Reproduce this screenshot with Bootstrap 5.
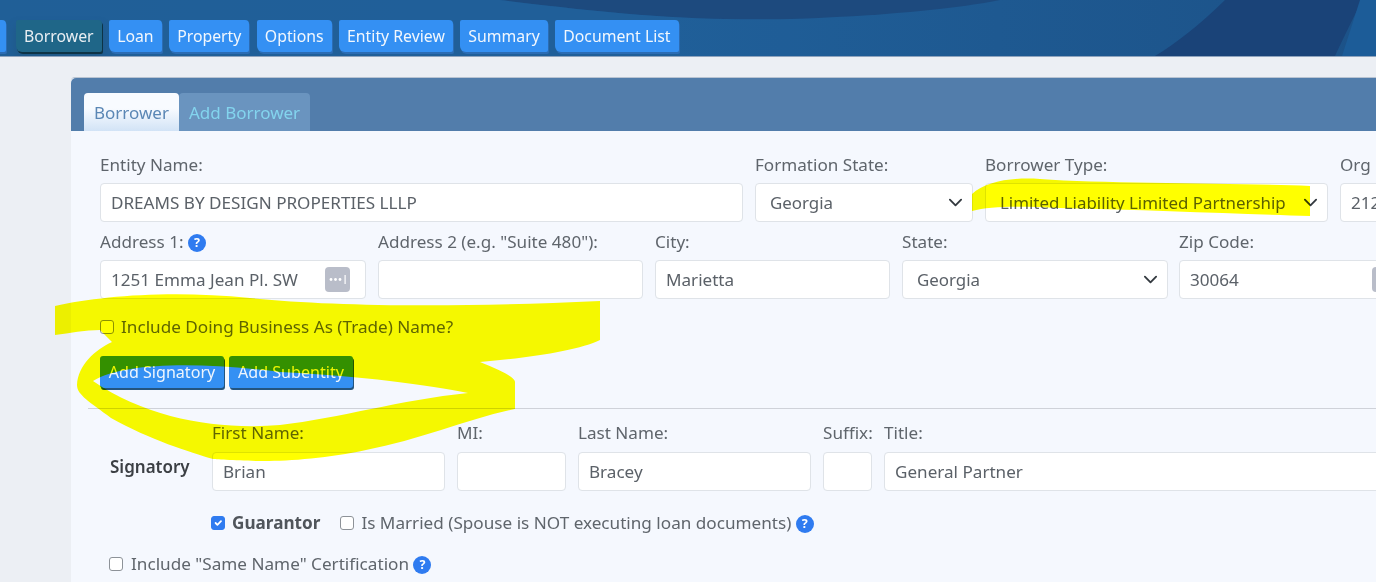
<!DOCTYPE html>
<html lang="en">
<head>
<meta charset="utf-8">
<title>Borrower</title>
<link rel="stylesheet" href="https://cdn.jsdelivr.net/npm/bootstrap@5.3.0/dist/css/bootstrap.min.css">
<style>
html,body{height:582px;overflow:hidden}
body{background:#eceff4;font-family:"Noto Sans",sans-serif;font-size:17px;color:#5b6168}
.topbar{position:relative;height:57px;background:linear-gradient(90deg,#215f97 0%,#20609a 45%,#1c5288 100%);border-bottom:1px solid #8ea3bd;overflow:hidden}
.topbar-art{position:absolute;inset:0;width:100%;height:100%}
.step-row{position:relative;padding-top:20px;margin-left:-14px;gap:7.5px}
.step-btn{height:32px;padding:0 8px;font-size:15.8px;line-height:33px;color:#f2f7fd;background:#3490f3;border:0;border-radius:2px 4px 2px 6px;box-shadow:1px 2px 0 #2b6cb4;white-space:nowrap}
.step-btn:hover{color:#fff;background:#3490f3}
.step-stub{width:20px;margin-right:2.5px}
.step-on,.step-on:hover{background:#1f6688;color:#e8eef2;box-shadow:1px 2px 0 #0d3346,0 6px 10px rgba(30,80,110,.45)}
.sheet{margin:20px 0 0 71px;width:1420px;height:520px;background:#f5f8fe;border:0;border-radius:4px 0 0 0;border-top:1px solid #b9c4d2}
.sheet-head{height:53px;background:#527dab;padding:15px 0 0 13px;border:0;border-radius:4px 0 0 0}
.sheet-tabs{border:0;margin:0;gap:0}
.sheet-tabs .nav-link{height:38px;padding:0 10px;line-height:40px;font-size:17px;border:0;border-radius:4px 4px 0 0;margin:0}
.sheet-tabs .nav-link.active{background:linear-gradient(#f8fbff 40%,#d2e3f6);color:#5b87b5}
.sheet-tabs .nav-link.tab-off{background:#6a94bf;color:#83d4ee}
.sheet-body{padding:25px 0 0 29px;position:relative}
.field-row{display:flex;gap:12px}
.fld label{display:block;height:18px;line-height:18px;margin:0 0 9px;font-size:17.1px;color:#5f656c;white-space:nowrap}
.fld .form-control,.fld .form-select{height:39px;padding:0 10px;font-size:17.1px;color:#5b6168;border:1px solid #dfe3e8;border-radius:4px;box-shadow:none;background-color:#fff}
.fld .form-select{padding-left:14px;font-size:16.9px;background-position:right 7px center;background-size:19px 15px}
.row-gap{margin-top:11px}
.w-entity{width:643px}.w-state{width:218px}.w-type{width:343px}.w-org{width:120px}
.w-ad1{width:266px}.w-ad2{width:265px}.w-city{width:235px}.w-st2{width:266px}.w-zip{width:234px;margin-left:-1px}
.w-first{width:233px}.w-mi{width:109px}.w-last{width:233px}.w-suffix{width:49px}.w-title{width:520px}
.input-wrap{position:relative}
.dots-btn{position:absolute;right:16px;top:7px;width:25px;height:25px;background:#b9bdc9;border-radius:4px;display:flex;align-items:center;justify-content:center}
.help{display:inline-block;width:18px;height:18px;border-radius:50%;background:#2f7bf0;color:#fff;font-size:12.5px;font-weight:700;line-height:18px;text-align:center;vertical-align:1px}
.chk{display:flex;align-items:center;gap:7px;font-size:17.15px;line-height:24px;color:#5f656c;margin:0}
.chk .form-check-input{width:14px;height:14px;margin:0;border:1.5px solid #8d9298;border-radius:3px;flex:none;background-color:#fff}
.chk .form-check-input:checked{background-color:#2f7bf0;border-color:#2f7bf0}
.dba-line{margin-top:18px;height:20px}
.act-row{margin-top:19px;gap:5px}
.act-btn{height:32px;padding:0 8px;font-size:16.1px;line-height:33px;color:#eef5fd;background:#3490f3;border:0;border-radius:3px;box-shadow:1px 2px 0 #23547f;width:124px;white-space:nowrap}
.divide{margin:20px 0 0 -12px;border:0;border-top:1px solid #b5b9bf;opacity:.6}
.sign-row{display:flex;margin-top:15px}
.sign-row .fld label{margin-bottom:10px}
.sign-name{width:112px;padding:0 0 0 10px;margin-top:30px;font-weight:600;font-size:17px;color:#3b3f44}
.opts-line{margin:20px 0 0 111px;gap:20px}
.guar{font-weight:700;color:#50555b}
.same-line{margin:17px 0 0 9px;gap:8px}
.marker{position:absolute;left:0;top:0;width:1376px;height:582px;mix-blend-mode:multiply;pointer-events:none}
</style>
</head>
<body>
<header class="topbar">
  <svg class="topbar-art" viewBox="0 0 1376 57" preserveAspectRatio="none" aria-hidden="true">
    <path d="M500 0 C620 15 700 22 800 19 C900 15 960 8 1000 0Z" fill="#1d4a7e"/>
    <path d="M1225 0 C1200 25 1175 45 1155 57 L1335 57 C1345 35 1355 15 1362 0Z" fill="#1a4378"/>
    <path d="M0 0H500C620 15 700 22 800 19V57H0Z" fill="#215f99" opacity=".4"/>
    <path d="M1360 0 L1342 57 H1376 V0Z" fill="#1c5c98"/>
  </svg>
  <nav class="d-flex step-row">
    <a class="btn step-btn step-stub" href="#" aria-label="Previous step"></a>
    <a class="btn step-btn step-on" href="#">Borrower</a>
    <a class="btn step-btn" href="#">Loan</a>
    <a class="btn step-btn" href="#">Property</a>
    <a class="btn step-btn" href="#">Options</a>
    <a class="btn step-btn" href="#">Entity Review</a>
    <a class="btn step-btn" href="#">Summary</a>
    <a class="btn step-btn" href="#">Document List</a>
  </nav>
</header>
<main class="card sheet">
  <div class="card-header sheet-head">
    <ul class="nav nav-tabs sheet-tabs">
      <li class="nav-item"><a class="nav-link active" href="#">Borrower</a></li>
      <li class="nav-item"><a class="nav-link tab-off" href="#">Add Borrower</a></li>
    </ul>
  </div>
  <div class="sheet-body">
    <div class="field-row">
      <div class="fld w-entity"><label>Entity Name:</label><input class="form-control" value="DREAMS BY DESIGN PROPERTIES LLLP"></div>
      <div class="fld w-state"><label>Formation State:</label><select class="form-select"><option>Georgia</option></select></div>
      <div class="fld w-type"><label>Borrower Type:</label><select class="form-select"><option>Limited Liability Limited Partnership</option></select></div>
      <div class="fld w-org"><label>Org</label><input class="form-control" value="212"></div>
    </div>
    <div class="field-row row-gap">
      <div class="fld w-ad1"><label>Address 1: <span class="help">?</span></label>
        <div class="input-wrap"><input class="form-control" value="1251 Emma Jean Pl. SW">
          <span class="dots-btn"><svg width="19" height="13" viewBox="0 0 19 13" aria-hidden="true"><circle cx="3" cy="6.5" r="1.4" fill="#fff"/><circle cx="7.5" cy="6.5" r="1.4" fill="#fff"/><circle cx="12" cy="6.5" r="1.4" fill="#fff"/><rect x="16.5" y="2" width="1.2" height="9" fill="#fff"/></svg></span></div></div>
      <div class="fld w-ad2"><label>Address 2 (e.g. "Suite 480"):</label><input class="form-control"></div>
      <div class="fld w-city"><label>City:</label><input class="form-control" value="Marietta"></div>
      <div class="fld w-st2"><label>State:</label><select class="form-select"><option>Georgia</option></select></div>
      <div class="fld w-zip"><label>Zip Code:</label><div class="input-wrap"><input class="form-control" value="30064"><span class="dots-btn"></span></div></div>
    </div>
    <label class="chk dba-line"><input class="form-check-input" type="checkbox">Include Doing Business As (Trade) Name?</label>
    <div class="d-flex act-row">
      <button class="btn act-btn" type="button">Add Signatory</button>
      <button class="btn act-btn" type="button">Add Subentity</button>
    </div>
    <hr class="divide">
    <div class="sign-row">
      <div class="sign-name">Signatory</div>
      <div class="field-row">
        <div class="fld w-first"><label>First Name:</label><input class="form-control" value="Brian"></div>
        <div class="fld w-mi"><label>MI:</label><input class="form-control"></div>
        <div class="fld w-last"><label>Last Name:</label><input class="form-control" value="Bracey"></div>
        <div class="fld w-suffix"><label>Suffix:</label><input class="form-control"></div>
        <div class="fld w-title"><label>Title:</label><input class="form-control" value="General Partner"></div>
      </div>
    </div>
    <div class="d-flex opts-line">
      <label class="chk"><input class="form-check-input" type="checkbox" checked><span class="guar">Guarantor</span></label>
      <label class="chk"><input class="form-check-input" type="checkbox"><span>Is Married (Spouse is NOT executing loan documents) <span class="help">?</span></span></label>
    </div>
    <label class="chk same-line"><input class="form-check-input" type="checkbox"><span>Include "Same Name" Certification <span class="help">?</span></span></label>
  </div>
</main>
<svg class="marker" viewBox="0 0 1376 582" aria-hidden="true">
  <path fill="#ffff00" d="M972 194 C985 182 1010 177 1040 179 C1110 184 1240 183 1310 186 L1310 216 C1240 214 1150 210 1060 208 C1020 206 990 206 972 211Z"/>
  <path fill="#ffff00" fill-rule="evenodd" d="M55 306 C100 296 170 290 250 298 C330 306 450 308 600 301 L600 340 C580 350 530 358 480 362 C505 372 515 378 515 382 L515 409 C470 418 420 440 366 450 C330 458 290 461 264 461 C240 461 213 459 213 459 C190 452 150 440 111 418 C90 402 77 395 77 385 C78 365 95 350 112 342 L100 330 C85 330 70 333 55 335 Z M93 381 C125 362 200 362 280 372 C360 376 430 385 468 393 C400 400 340 418 280 425 C220 430 150 420 93 381Z"/>
</svg>
<script src="https://cdn.jsdelivr.net/npm/bootstrap@5.3.0/dist/js/bootstrap.bundle.min.js"></script>
</body>
</html>
